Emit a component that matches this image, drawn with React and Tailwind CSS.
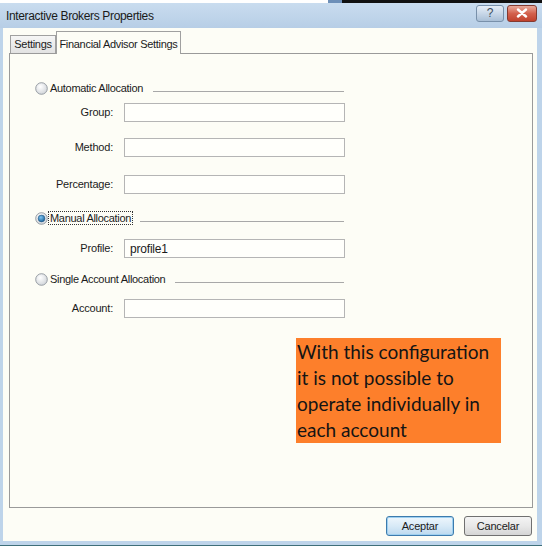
import React from 'react';

const ui = { fontFamily: '"Liberation Sans", Arial, sans-serif' };
const note = { fontFamily: 'Lato, "Open Sans", sans-serif' };

// Small aero-style radio button
const Radio = ({ checked }) => (
  <svg width="13" height="13" viewBox="0 0 13 13" className="shrink-0">
    <defs>
      <radialGradient id="rb" cx="0.4" cy="0.35" r="0.7">
        <stop offset="0" stopColor="#ffffff" />
        <stop offset="1" stopColor="#cfd3d8" />
      </radialGradient>
      <radialGradient id="rd" cx="0.4" cy="0.35" r="0.7">
        <stop offset="0" stopColor="#7ec4f2" />
        <stop offset="1" stopColor="#155e94" />
      </radialGradient>
    </defs>
    <circle cx="6.5" cy="6.5" r="5.8" fill="url(#rb)" stroke="#8d949c" strokeWidth="0.9" />
    {checked && <circle cx="6.5" cy="6.5" r="3.4" fill="url(#rd)" stroke="#1e4f7a" strokeWidth="0.5" />}
  </svg>
);

const GroupTitle = ({ label, checked, focused, gap = 9 }) => (
  <div className="flex items-center h-[14px] ml-[25px] w-[309px]">
    <Radio checked={checked} />
    <span
      className={`ml-[1px] px-[1px] text-[11px] leading-[12px] tracking-[-0.3px] whitespace-nowrap text-[#1b1b1b] ${
        focused ? 'outline outline-1 outline-dotted outline-[#333]' : ''
      }`}
    >
      {label}
    </span>
    <div className="flex-1 mt-[6px] border-t border-[#a8a8a8]" style={{ marginLeft: gap }} />
  </div>
);

const Field = ({ label, value, mt }) => (
  <div className={`flex items-center ${mt}`}>
    <div className="w-[104px] text-right text-[11px] tracking-[-0.2px] text-[#1b1b1b] pr-[1px]">{label}</div>
    <div className="ml-[10px] w-[221px] h-[19px] border border-[#b5b5b5] bg-[#fffffb] flex items-center px-[5px] text-[12px] tracking-[-0.2px] text-[#1b1b1b]">
      {value}
    </div>
  </div>
);

const App = () => {
  return (
    <div className="w-[542px] h-[546px] flex flex-col bg-[#bed4ea] overflow-hidden" style={ui}>
      {/* leftover of the window behind */}
      <div className="h-[3px] flex">
        <div className="w-[328px] bg-white" />
        <div className="w-[14px] bg-[#6d8fb8]" />
        <div className="flex-1 bg-[#111]" />
      </div>

      {/* title bar */}
      <div className="h-[25px] flex items-center pl-[6px] pr-[5px] bg-gradient-to-b from-[#c9dcef] to-[#b7cee6]">
        <span className="text-[12px] tracking-[-0.35px] text-[#1a1a1a]">Interactive Brokers Properties</span>
        <div className="ml-auto flex gap-[3px] -mt-[5px]">
          <div className="w-[28px] h-[17px] rounded-[3px] border border-[#7890aa] bg-gradient-to-b from-[#e6eef7] via-[#c8d7e8] to-[#a9bfd6] flex items-center justify-center text-[12px] leading-none text-[#3c4b5c]">
            ?
          </div>
          <div className="w-[30px] h-[17px] rounded-[3px] border border-[#843a30] bg-gradient-to-b from-[#e9a99a] via-[#d3614d] to-[#c0412c] flex items-center justify-center">
            <svg width="12" height="10" viewBox="0 0 12 10">
              <path d="M2 1.5 L10 8.5 M10 1.5 L2 8.5" stroke="#fff" strokeWidth="2.4" strokeLinecap="round" />
            </svg>
          </div>
        </div>
      </div>

      {/* client area */}
      <div className="flex-1 ml-[3px] mr-[5px] mb-[4px] bg-[#fdfdf6] flex flex-col pl-[6px] pr-[5px] pt-[3px]">
        {/* tabs */}
        <div className="flex items-end h-[22px] relative z-10">
          <div className="ml-[1px] w-[46px] h-[18px] border border-b-0 border-[#a0a0a0] bg-gradient-to-b from-[#f6f6f6] to-[#e2e2e2] flex items-center justify-center text-[11px] tracking-[-0.3px] text-[#1b1b1b]">
            Settings
          </div>
          <div className="w-[125px] h-[23px] border border-b-0 border-[#a0a0a0] bg-[#fdfdf6] flex items-start justify-center pt-[4px] text-[11px] tracking-[-0.3px] whitespace-nowrap text-[#1b1b1b] -mb-px">
            Financial Advisor Settings
          </div>
        </div>

        {/* tab page */}
        <div className="w-[524px] h-[455px] border border-[#9a9a9a] bg-[#fdfdf6] flex flex-col pt-[27px]">
          <GroupTitle label="Automatic Allocation" gap={9} />
          <Field label="Group:" mt="mt-[8px]" />
          <Field label="Method:" mt="mt-[16px]" />
          <Field label="Percentage:" mt="mt-[18px]" />

          <div className="mt-[17px]">
            <GroupTitle label="Manual Allocation" checked focused gap={8} />
          </div>
          <Field label="Profile:" value="profile1" mt="mt-[14px]" />

          <div className="mt-[14px]">
            <GroupTitle label="Single Account Allocation" gap={9} />
          </div>
          <Field label="Account:" mt="mt-[13px]" />

          <div className="mt-[20px] ml-[286px] w-[205px] h-[105px] bg-[#fd7f2b] px-[1px] pt-[1px] text-[19px] leading-[26px] text-[#141414] whitespace-nowrap" style={note}>
            With this configuration
            <br />
            it is not possible to
            <br />
            operate individually in
            <br />
            each account
          </div>
        </div>

        {/* dialog buttons */}
        <div className="flex justify-end gap-[10px] mt-[8px]">
          <button className="w-[68px] h-[20px] rounded-[3px] border border-[#3d7bad] bg-gradient-to-b from-[#eef6fc] via-[#d8eaf7] to-[#bcd9ef] text-[11px] tracking-[-0.2px] text-[#1b1b1b] shadow-[inset_0_0_0_1px_#9fd0f0]">
            Aceptar
          </button>
          <button className="w-[68px] h-[20px] rounded-[3px] border border-[#707070] bg-gradient-to-b from-[#f4f4f4] via-[#e8e8e8] to-[#d5d5d5] text-[11px] tracking-[-0.2px] text-[#1b1b1b]">
            Cancelar
          </button>
        </div>
      </div>
      <div className="h-[1px] bg-[#3f6f7a]" />
    </div>
  );
};

export default App;
